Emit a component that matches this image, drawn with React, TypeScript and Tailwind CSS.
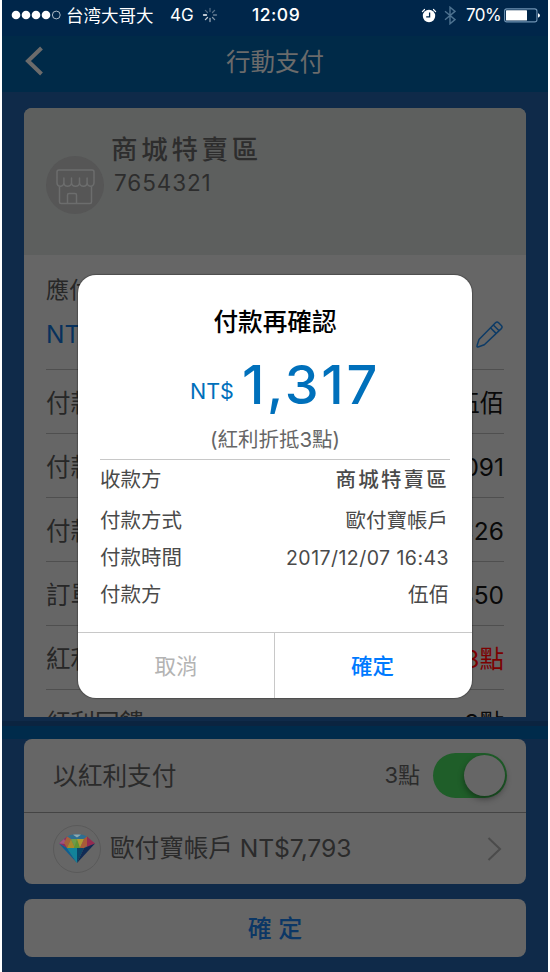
import clsx from 'clsx';

const orderRows = [
  { label: '付款方', value: '伍佰' },
  { label: '付款帳號', value: '00091' },
  { label: '付款時間', value: '16:26' },
  { label: '訂單金額', value: '1,350' },
  { label: '紅利折抵', value: '3點', red: true },
  { label: '紅利回饋', value: '3點' },
];

function StatusBar() {
  return (
    <div className="flex h-9 shrink-0 items-center bg-[#00264a] pb-[6px] text-white">
      <svg className="ml-[9px] h-[10px] w-[50px]" viewBox="0 0 50 10">
        <circle cx="5" cy="5" r="4.3" fill="#fff" />
        <circle cx="15" cy="5" r="4.3" fill="#fff" />
        <circle cx="25" cy="5" r="4.3" fill="#fff" />
        <circle cx="35" cy="5" r="4.3" fill="#fff" />
        <circle cx="45.3" cy="5" r="3.9" fill="none" stroke="#d5dde5" strokeWidth="0.8" />
      </svg>
      <span className="ml-[5px] w-[90px] pt-px text-[17.5px] leading-none">台湾大哥大</span>
      <span className="ml-[14px] w-[24px] text-[17px] leading-none">4G</span>
      {/* Loading spinner */}
      <svg className="ml-[8px] h-4 w-4" viewBox="0 0 16 16" stroke="#fff" strokeWidth="1.3" strokeLinecap="round">
        <path d="M8 1.5v3" opacity=".3" />
        <path d="M12.6 3.4 10.5 5.5" opacity=".35" />
        <path d="M14.5 8h-3" opacity=".4" />
        <path d="M12.6 12.6 10.5 10.5" opacity=".5" />
        <path d="M8 14.5v-3" opacity=".6" />
        <path d="M3.4 12.6 5.5 10.5" opacity=".75" />
        <path d="M1.5 8h3" />
        <path d="M3.4 3.4 5.5 5.5" opacity=".3" />
      </svg>
      <span className="ml-[34px] w-[50px] text-[17.5px] leading-none font-medium tracking-[0.5px]">12:09</span>
      <svg className="ml-[119px] h-[15px] w-[16px]" viewBox="0 0 16 15">
        <circle cx="8" cy="8" r="6.2" fill="#fff" />
        <path d="M1.4 3.6 3.5 1.5M14.6 3.6l-2.1-2.1" stroke="#fff" strokeWidth="1.2" strokeLinecap="round" />
        <path d="M8.6 4.5v4.3H5.2" fill="none" stroke="#00264a" strokeWidth="1.3" />
      </svg>
      <svg className="ml-[7px] h-[19px] w-[12px]" viewBox="0 0 12 19" fill="none" stroke="#4d7290" strokeWidth="1.4">
        <path d="M1 5.2l10 8.4-5 4.2V1.2l5 4.2L1 13.8" />
      </svg>
      <span className="ml-[10px] w-[35px] text-[17px] leading-none tracking-[-0.6px] whitespace-nowrap">70%</span>
      <svg className="ml-[3px] h-[15px] w-[37px]" viewBox="0 0 37 15">
        <rect x="0.6" y="0.9" width="32.3" height="13" rx="2.2" fill="none" stroke="#6f93b3" strokeWidth="1.1" />
        <rect x="2" y="2.3" width="21" height="10.3" rx="0.6" fill="#fff" />
        <path d="M34 5.2c2.6.8 2.6 3.6 0 4.4z" fill="#fff" />
      </svg>
    </div>
  );
}

function StoreIcon() {
  return (
    <div className="mt-[48px] flex h-[58px] w-[58px] shrink-0 items-center justify-center rounded-full bg-[#565656]">
      <svg className="mt-1 h-[36px] w-[39px]" viewBox="0 0 39 36" fill="none" stroke="#6c6d6d" strokeWidth="1.5" strokeLinejoin="round">
        <path d="M3 1h33a2 2 0 0 1 2 2v10.5c0 2.2-1.6 3.7-3.3 3.7-1.9 0-3.6-1.5-3.6-3.7V9v4.5c0 2.2-1.6 3.7-3.7 3.7s-3.9-1.5-3.9-3.7V9v4.5c0 2.2-1.8 3.7-4 3.7s-4-1.5-4-3.7V9v4.5c0 2.2-1.8 3.7-3.9 3.7s-3.7-1.5-3.7-3.7V9v4.5c0 2.2-1.7 3.7-3.6 3.7S1 15.7 1 13.5V3a2 2 0 0 1 2-2z" />
        <path d="M3.5 17.5V33a1.5 1.5 0 0 0 1.5 1.5h29a1.5 1.5 0 0 0 1.5-1.5V17.5" />
        <path d="M11.5 34.5V26a1.5 1.5 0 0 1 1.5-1.5h6a1.5 1.5 0 0 1 1.5 1.5v8.5" />
      </svg>
    </div>
  );
}

function Diamond() {
  return (
    <svg className="h-[29px] w-[36px]" viewBox="0 0 36 29">
      <path d="M0 9.5 8 2.5l3 3.5-3 8z" fill="#8d2c62" />
      <path d="M0 9.5 5 5l3 5z" fill="#a0557f" />
      <path d="M8 2.5C13-.6 23-.6 28 2.5L24 5H12z" fill="#2e6f91" />
      <path d="M14 .8c2.5-.5 5.5-.5 8 0L18 3.5z" fill="#8fa9b0" />
      <path d="M8 2.5l4 2.5-4 9-3-5z" fill="#a4613e" />
      <path d="M12 5l-4 9h8z" fill="#a8892a" />
      <path d="M12 5h7l-3 9z" fill="#6f9b48" />
      <path d="M18 5l-3 9h6z" fill="#5f9434" />
      <path d="M18 5h7l-4 9z" fill="#b09a30" />
      <path d="M25 5l3-2.5 4 5-7 6.5h-4z" fill="#a85a38" />
      <path d="M28 2.5l8 7-8 4.5z" fill="#942b50" />
      <path d="M0 9.5 8 14l10 15z" fill="#0d5f93" />
      <path d="M8 14h10v15z" fill="#12839a" />
      <path d="M18 14h7l-7 15z" fill="#0a4669" />
      <path d="M25 14l11-4.5L18 29z" fill="#102b55" />
    </svg>
  );
}

function MerchantCard() {
  return (
    <div className="mx-[22px] mt-4 h-[609px] overflow-hidden rounded-t-lg bg-[#666]">
      <div className="flex h-[147px] bg-[#5d5f5e] pl-[22px]">
        <StoreIcon />
        <div className="ml-[7px] pt-[24px] text-[#2d2d2d]">
          <div className="text-[26.5px] leading-[35px] font-medium tracking-[3.7px]">商城特賣區</div>
          <div className="ml-[3px] text-[22.5px] leading-[32px] tracking-[0.9px]">7654321</div>
        </div>
      </div>
      <div className="px-[22px] text-[24.5px]">
        <div className="h-[115px] border-b border-[#4f4f4f] pt-[18px]">
          <div className="text-[23px] leading-[34px] text-[#272727]">應付金額</div>
          <div className="flex items-center justify-between pt-[9px]">
            <span className="text-[24.5px] leading-[36px] text-[#08315c]">NT$1,317</span>
            <svg className="mr-px h-[27px] w-[27px]" viewBox="0 0 27 27" fill="none" stroke="#0d3b66" strokeWidth="1.5" strokeLinejoin="round">
              <path d="M1 24.8 3 18.5 19.5 1.8a2.2 2.2 0 0 1 3.1 0l2.7 2.7a2.2 2.2 0 0 1 0 3.1L8.3 23.7 2 26a.9.9 0 0 1-1-1.2z" />
              <path d="M14.5 6.8l5.8 5.8M17.3 4l5.8 5.8" />
            </svg>
          </div>
        </div>
        {orderRows.map((row) => (
          <div key={row.label} className="flex h-16 items-center justify-between border-b border-[#4f4f4f] pt-[3px]">
            <span className="text-[#272727]">{row.label}</span>
            <span className={clsx(row.red ? 'text-[#7c0000]' : 'text-[#090909]')}>{row.value}</span>
          </div>
        ))}
      </div>
    </div>
  );
}

function PaymentFooter() {
  return (
    <div>
      <div className="mt-[4px] h-[5px] bg-[#0b2440]" />
      <div className="h-[13px] bg-[#002b4b]" />
      <div className="mx-[22px] h-[145px] rounded-lg bg-[#666] text-[24.7px] text-[#2b2b2b]">
        <div className="flex h-[74px] items-center border-b border-[#444] pr-[19px] pl-[29px]">
          <span className="flex-1 pt-[2px]">以紅利支付</span>
          <span className="mr-[13px] text-[22px]">3點</span>
          <div className="flex h-[45px] w-[74px] items-center justify-end rounded-full bg-[#1f5e29] pr-[2px]">
            <div className="h-[41px] w-[41px] rounded-full bg-[#666] shadow-[0_3px_6px_rgba(0,0,0,0.4)]" />
          </div>
        </div>
        <div className="flex h-[71px] items-center pr-[24px] pl-[29px]">
          <div className="flex h-[48px] w-[48px] items-center justify-center rounded-full border border-[#5a5a5a]">
            <Diamond />
          </div>
          <span className="ml-[9px] flex-1 pt-px tracking-[-0.1px]">歐付寶帳戶 NT$7,793</span>
          <svg className="h-[24px] w-[15px]" viewBox="0 0 15 24" fill="none" stroke="#4b4b4b" strokeWidth="2">
            <path d="M1.5 1 13 12 1.5 23" />
          </svg>
        </div>
      </div>
      <button className="mx-[22px] mt-[15px] block h-[58px] w-[502px] rounded-lg bg-[#666] pt-[2px] text-[24px] font-medium text-[#0c3765]">
        確 定
      </button>
    </div>
  );
}

function ConfirmDialog() {
  return (
    <div className="absolute top-[275px] left-[76px] flex h-[423px] w-[394px] flex-col rounded-[18px] bg-white text-[20.5px] text-[#4a4a4a] shadow-[0_0_1px_1px_rgba(0,0,0,0.25)]">
      <h2 className="mt-[30px] text-center text-[24.6px] leading-[34px] font-medium text-black">付款再確認</h2>
      <div className="flex h-[74px] items-start pt-[21px] pl-[112px] whitespace-nowrap text-[#0070bb]">
        <span className="w-[52px] pt-[15px] text-[21.5px] leading-[32px]">NT$</span>
        <span className="text-[54px] leading-[50px] font-medium tracking-[2.7px]">1,317</span>
      </div>
      <div className="mt-[12px] text-center leading-[30px] text-[#666]">(紅利折抵3點)</div>
      <div className="mx-[22px] mt-[4px] border-t-[1.5px] border-[#c8c8c8]">
        <div className="flex h-[41px] items-center justify-between pr-[1px]">
          <span>收款方</span>
          <span className="text-[20.5px] font-medium tracking-[2.2px]">商城特賣區</span>
        </div>
        <div className="flex h-[41px] items-center justify-between pr-[2px]">
          <span>付款方式</span>
          <span>歐付寶帳戶</span>
        </div>
        <div className="flex h-[33px] items-center justify-between pr-[1px]">
          <span>付款時間</span>
          <span className="text-[19.5px] tracking-[0.45px]">2017/12/07 16:43</span>
        </div>
        <div className="flex h-[40px] items-center justify-between pr-[1px]">
          <span>付款方</span>
          <span>伍佰</span>
        </div>
      </div>
      <div className="mt-auto grid h-[66px] grid-cols-2 border-t border-[#c8c8c8] text-[21.5px]">
        <button className="border-r border-[#c8c8c8] pt-[2px] text-[#b3b3b3]">取消</button>
        <button className="pt-[2px] pr-[2px] font-medium text-[#007aff]">確定</button>
      </div>
    </div>
  );
}

export default function App() {
  return (
    <div className="h-[972px] w-[550px] overflow-hidden bg-white px-[2px]">
      <div className="relative flex h-full flex-col bg-[#0f2a49] font-['Inter','Noto_Sans_CJK_TC',sans-serif]">
        <StatusBar />
        <header className="flex h-[56px] shrink-0 items-center bg-[#002a48] pb-[6px] text-[#6b6b6b]">
          <svg className="ml-[23px] h-[30px] w-[19px]" viewBox="0 0 19 30" fill="none" stroke="currentColor" strokeWidth="4">
            <path d="M16.5 2 3 15l13.5 13" />
          </svg>
          <h1 className="flex-1 pt-[2px] pr-[42px] text-center text-[24.5px]">行動支付</h1>
        </header>
        <MerchantCard />
        <PaymentFooter />
        <ConfirmDialog />
      </div>
    </div>
  );
}
